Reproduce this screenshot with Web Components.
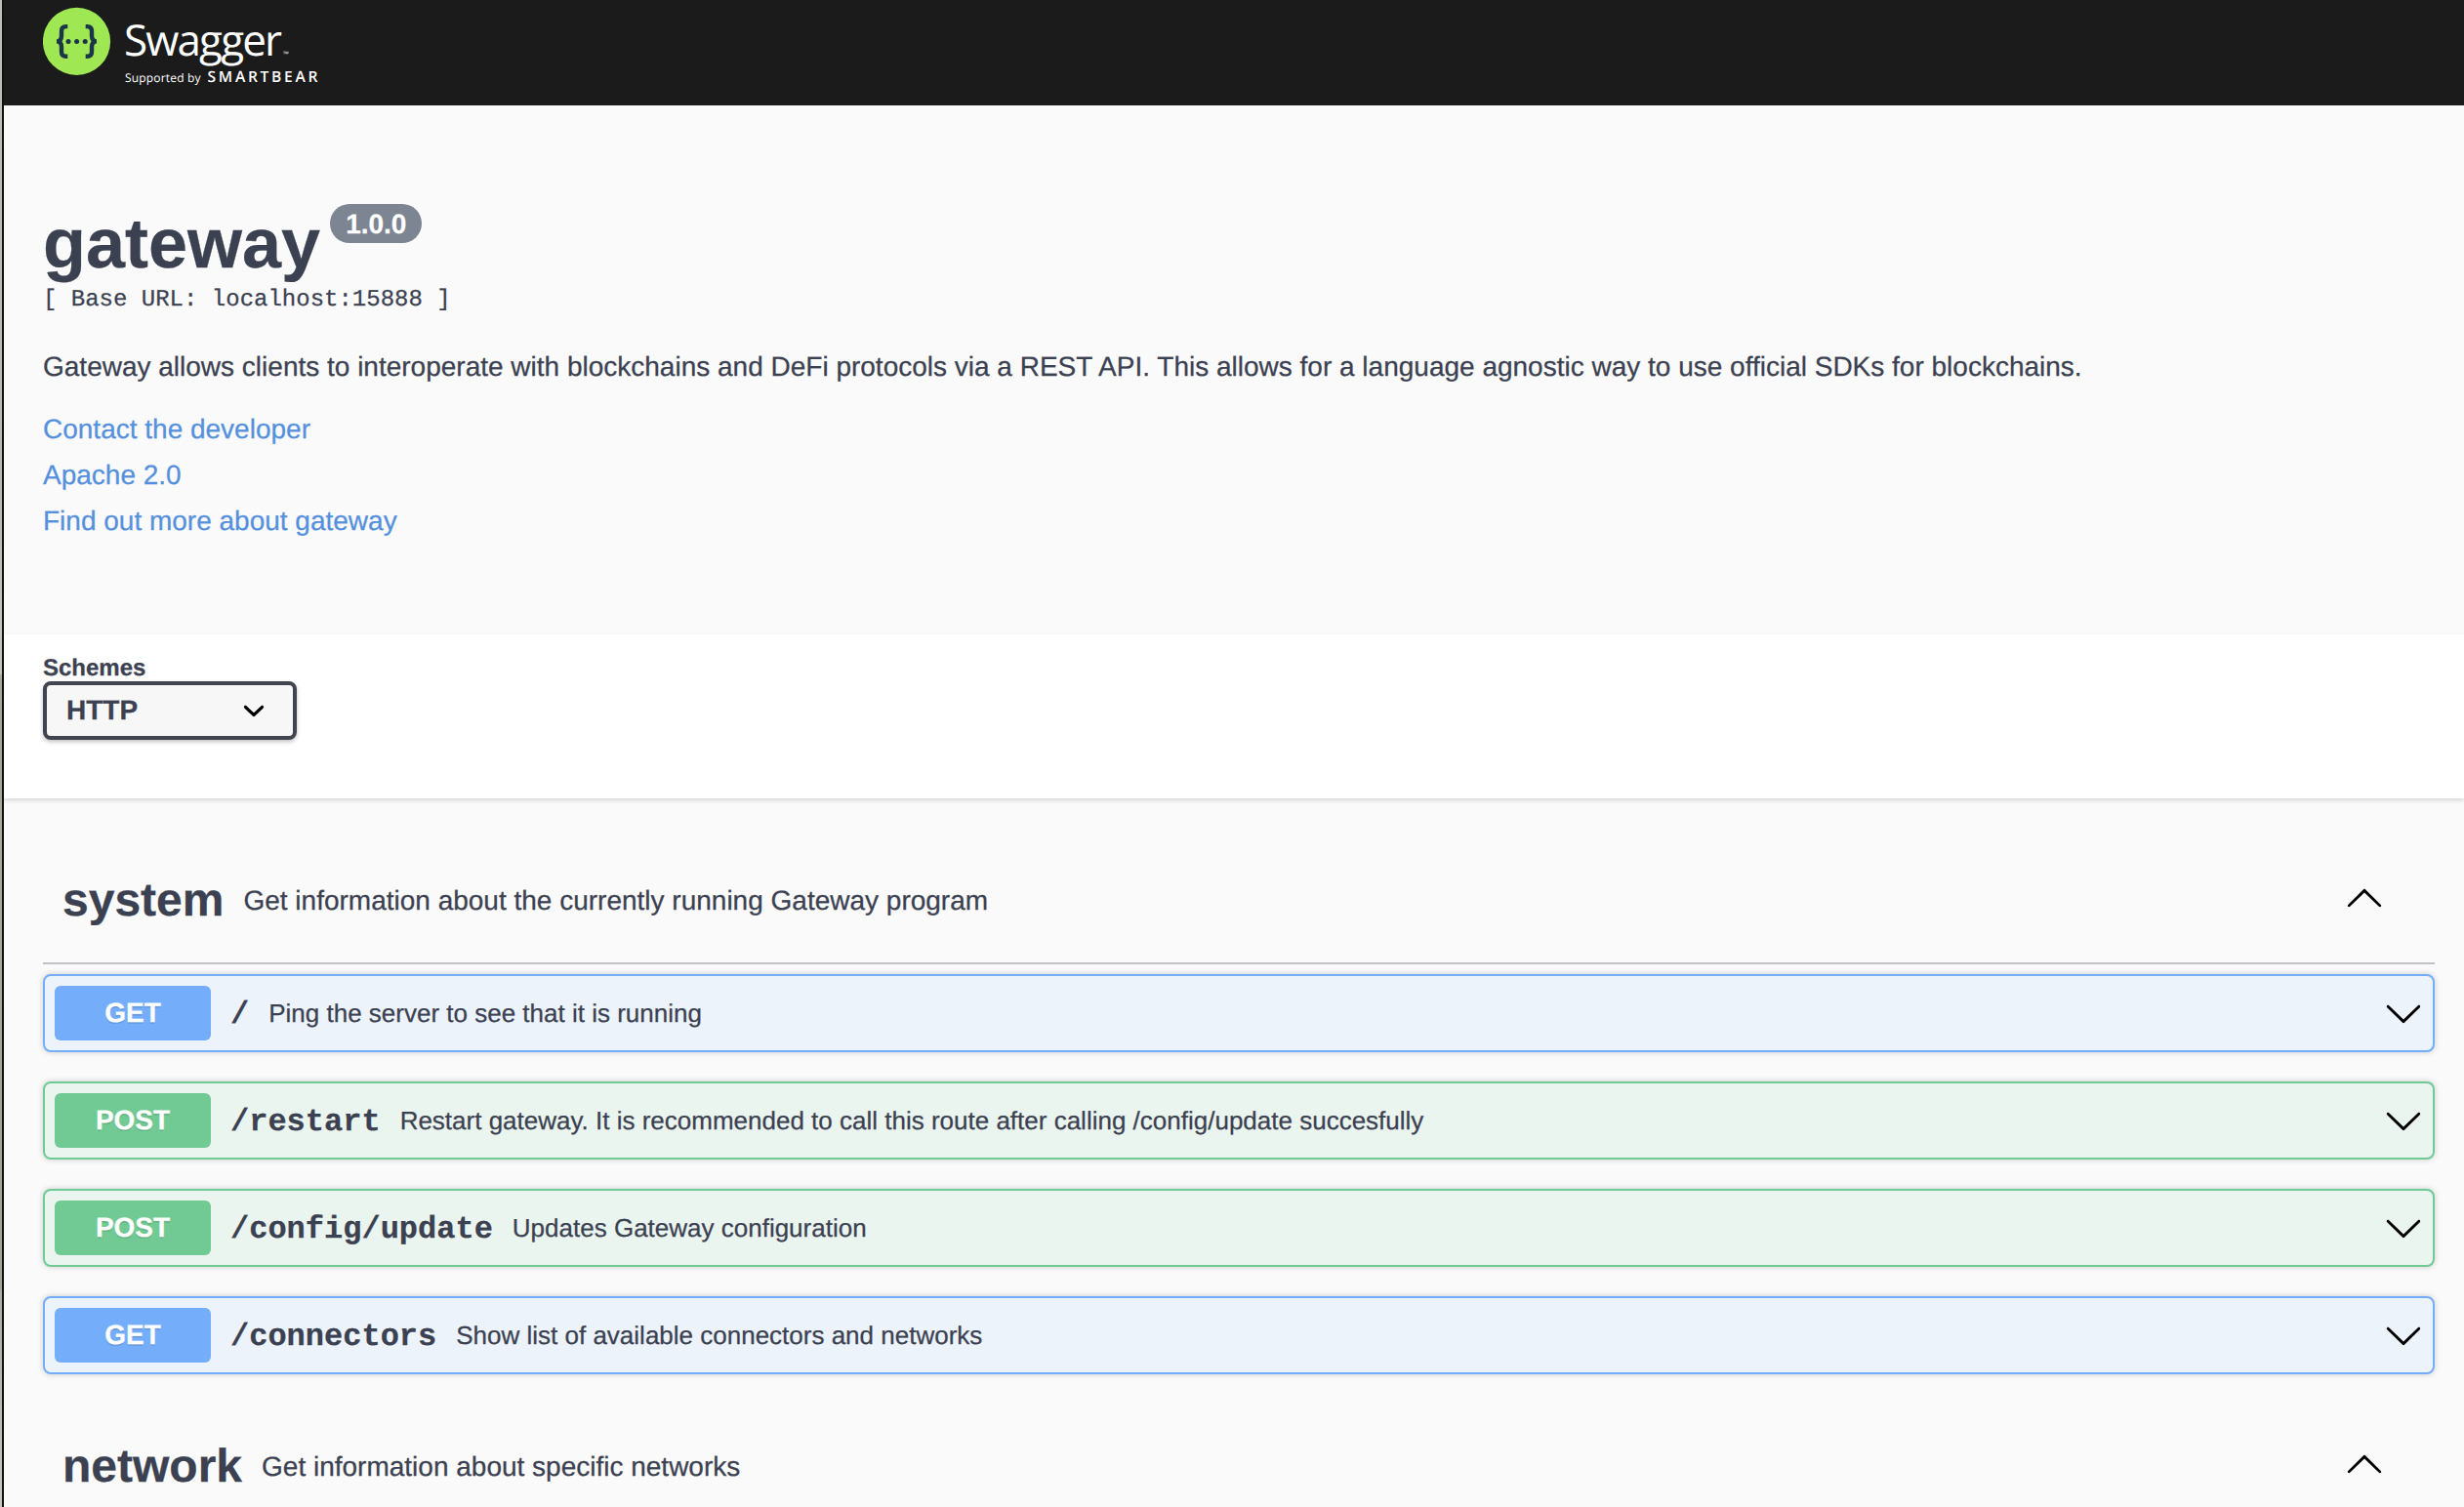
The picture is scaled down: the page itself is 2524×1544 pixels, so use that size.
<!DOCTYPE html>
<html lang="en">
<head>
<meta charset="utf-8">
<title>Swagger UI</title>
<style>
html,body{margin:0;padding:0}
body{height:1544px;overflow:hidden;background:#fafafa;color:#3b4151;font-family:"Liberation Sans",Arial,sans-serif;text-rendering:geometricPrecision;-webkit-text-stroke:.25px currentColor}
</style>
</head>
<body>
<api-page>
  <top-bar></top-bar>
  <api-info name="gateway" version="1.0.0" base="[ Base URL: localhost:15888 ]">
    <span slot="description">Gateway allows clients to interoperate with blockchains and DeFi protocols via a REST API. This allows for a language agnostic way to use official SDKs for blockchains.</span>
    <info-link>Contact the developer</info-link>
    <info-link>Apache 2.0</info-link>
    <info-link>Find out more about gateway</info-link>
  </api-info>
  <scheme-bar label="Schemes">HTTP</scheme-bar>
  <tag-section name="system" description="Get information about the currently running Gateway program">
    <op-block method="GET" path="/">Ping the server to see that it is running</op-block>
    <op-block method="POST" path="/restart">Restart gateway. It is recommended to call this route after calling /config/update succesfully</op-block>
    <op-block method="POST" path="/config/update">Updates Gateway configuration</op-block>
    <op-block method="GET" path="/connectors">Show list of available connectors and networks</op-block>
  </tag-section>
  <tag-section name="network" description="Get information about specific networks"></tag-section>
</api-page>
<script>
const define = (tag, render) => customElements.define(tag, class extends HTMLElement {
  constructor() {
    super();
    this.attachShadow({ mode: 'open' });
  }
  connectedCallback() {
    this.shadowRoot.innerHTML = render(this);
  }
});
const attr = (el, n) => el.getAttribute(n) || '';

define('api-page', () => `
<style>
:host{display:flex;height:1544px;overflow:hidden}
.edge{flex:none;width:2px;background:linear-gradient(#bfc0ba 0,#b9bab2 500px,#c8c8c2 690px,#a9aa9e 692px,#a3a498 1320px,#acaca4 1322px,#c8c8c2 1544px);border-right:2px solid #111}
main{flex:1;min-width:0;display:flex;flex-direction:column}
</style>
<div class="edge"></div><main><slot></slot></main>`);

define('top-bar', () => `
<style>
:host{display:flex;flex:none;height:108px;background:#1b1b1b;padding-left:40px;box-sizing:border-box;-webkit-text-stroke:0}
svg{display:block}
text{font-family:"Open Sans",sans-serif;fill:#fff}
</style>
<svg width="300" height="100" viewBox="44 0 300 100">
<circle cx="78.5" cy="42.4" r="34.6" fill="#9fe854"/>
<g fill="none" stroke="#1b3648" stroke-width="4.4">
<path d="M69.3 27.1h-1.6c-3.4 0-4.7 1.6-4.7 4.8v4.6c0 3.6-1.7 5.9-5 5.9c3.3 0 5 2.3 5 5.9v4.6c0 3.2 1.3 4.8 4.7 4.8h1.6"/>
<path d="M87.7 27.1h1.6c3.4 0 4.7 1.6 4.7 4.8v4.6c0 3.6 1.7 5.9 5 5.9c-3.3 0-5 2.3-5 5.9v4.6c0 3.2-1.3 4.8-4.7 4.8h-1.6"/>
</g>
<g fill="#1b3648"><circle cx="70" cy="42.5" r="2.5"/><circle cx="78.6" cy="42.5" r="2.5"/><circle cx="87.2" cy="42.5" r="2.5"/></g>
<text x="127" y="56.8" font-size="44" textLength="162" lengthAdjust="spacing">Swagger</text>
<text x="290" y="58" font-size="7.5">™</text>
<text x="128" y="84.4" font-size="12" textLength="77.5" lengthAdjust="spacing">Supported by</text>
<text x="212.5" y="84.4" font-size="15.6" font-weight="600" textLength="113" lengthAdjust="spacing">SMARTBEAR</text>
</svg>`);

define('api-info', el => `
<style>
:host{display:block;flex:none;box-sizing:border-box;height:542px;padding:100px 40px 0}
.title{display:flex;align-items:flex-start;gap:10px;height:83px}
h1{margin:0;font-size:72px;line-height:84px;font-weight:700}
.ver{margin-top:1px;height:40px;line-height:42px;border-radius:20px;background:#7d8492;color:#fff;font-size:28px;font-weight:700;padding:0 16px}
.base{font:24px/28px "Liberation Mono","Courier New",monospace;white-space:pre;margin-top:3px}
.desc{font-size:28px;line-height:40px;margin-top:34px;white-space:nowrap}
.links{display:flex;flex-direction:column;margin-top:20px}
</style>
<div class="title"><h1>${attr(el,'name')}</h1><span class="ver">${attr(el,'version')}</span></div>
<div class="base">${attr(el,'base')}</div>
<div class="desc"><slot name="description"></slot></div>
<div class="links"><slot></slot></div>`);

define('info-link', () => `
<style>
:host{display:block;height:47px}
a{color:#5590dd;font-size:28px;line-height:47px;text-decoration:none}
</style>
<a><slot></slot></a>`);

define('scheme-bar', el => `
<style>
:host{display:flex;flex-direction:column;align-items:flex-start;flex:none;box-sizing:border-box;height:168px;padding:20px 40px 0;background:#fff;box-shadow:0 2px 4px rgba(0,0,0,.15)}
label{font-size:24px;line-height:30px;height:28px;font-weight:700}
.select{display:flex;align-items:center;justify-content:space-between;box-sizing:border-box;width:260px;height:60px;border:4px solid #41444e;border-radius:8px;background:#f7f7f7;box-shadow:0 2px 4px rgba(0,0,0,.25);padding:0 18px 0 20px;font-size:28px;line-height:52px;font-weight:700}
svg{display:block;width:44px;height:44px}
</style>
<label>${attr(el,'label')}</label>
<div class="select"><span><slot></slot></span><svg viewBox="0 0 20 20"><path d="M13.418 7.859c.271-.268.709-.268.978 0 .27.268.272.701 0 .969l-3.908 3.83c-.27.268-.707.268-.979 0l-3.908-3.83c-.27-.267-.27-.701 0-.969.271-.268.709-.268.978 0L10 11z"/></svg></div>`);

define('tag-section', el => `
<style>
:host{display:block;flex:none;padding:60px 30px 0 40px;height:580px;box-sizing:border-box}
header{display:flex;align-items:center;box-sizing:border-box;height:110px;padding:0 52px 18px 20px;border-bottom:2px solid rgba(59,65,81,.3)}
h3{margin:0;font-size:48px;line-height:56px;font-weight:700}
small{flex:1;font-size:28px;line-height:40px;padding-left:20px}
svg{display:block;width:40px;height:40px;margin-bottom:8px}
.ops{display:flex;flex-direction:column;gap:30px;padding-top:10px}
</style>
<header><h3>${attr(el,'name')}</h3><small>${attr(el,'description')}</small>
<svg viewBox="0 0 20 20"><path d="M17.418 14.908c.272.268.709.268.979 0s.271-.701 0-.969l-7.908-7.83c-.27-.268-.707-.268-.979 0l-7.908 7.83c-.27.268-.27.701 0 .969.271.268.709.268.979 0L10 7.767z"/></svg></header>
<div class="ops"><slot></slot></div>`);

define('op-block', el => {
  const get = attr(el,'method') === 'GET';
  const c = get ? '#74adf9' : '#71c994';
  const border = get ? '#74adf9' : '#6fca95';
  const bg = get ? '#ecf3fb' : '#ebf5f0';
  return `
<style>
:host{display:flex;align-items:center;box-sizing:border-box;height:80px;padding:0 10px;border:2px solid ${border};border-radius:8px;background:${bg};box-shadow:0 0 6px rgba(0,0,0,.19)}
.method{width:160px;height:56px;line-height:56px;border-radius:6px;background:${c};color:#fff;font-size:28px;font-weight:700;text-align:center;text-shadow:0 2px 0 rgba(0,0,0,.1)}
.path{font:700 32px/40px "Liberation Mono","Courier New",monospace;padding:4px 20px 0}
.text{flex:1;font-size:26px;line-height:40px;white-space:nowrap}
svg{display:block;width:40px;height:40px}
</style>
<span class="method">${attr(el,'method')}</span><span class="path">${attr(el,'path')}</span><span class="text"><slot></slot></span>
<svg viewBox="0 0 20 20"><path d="M17.418 6.109c.272-.268.709-.268.979 0s.271.701 0 .969l-7.908 7.83c-.27.268-.707.268-.979 0l-7.908-7.83c-.27-.268-.27-.701 0-.969.271-.268.709-.268.979 0L10 13.25z"/></svg>`;
});
</script>
</body>
</html>
